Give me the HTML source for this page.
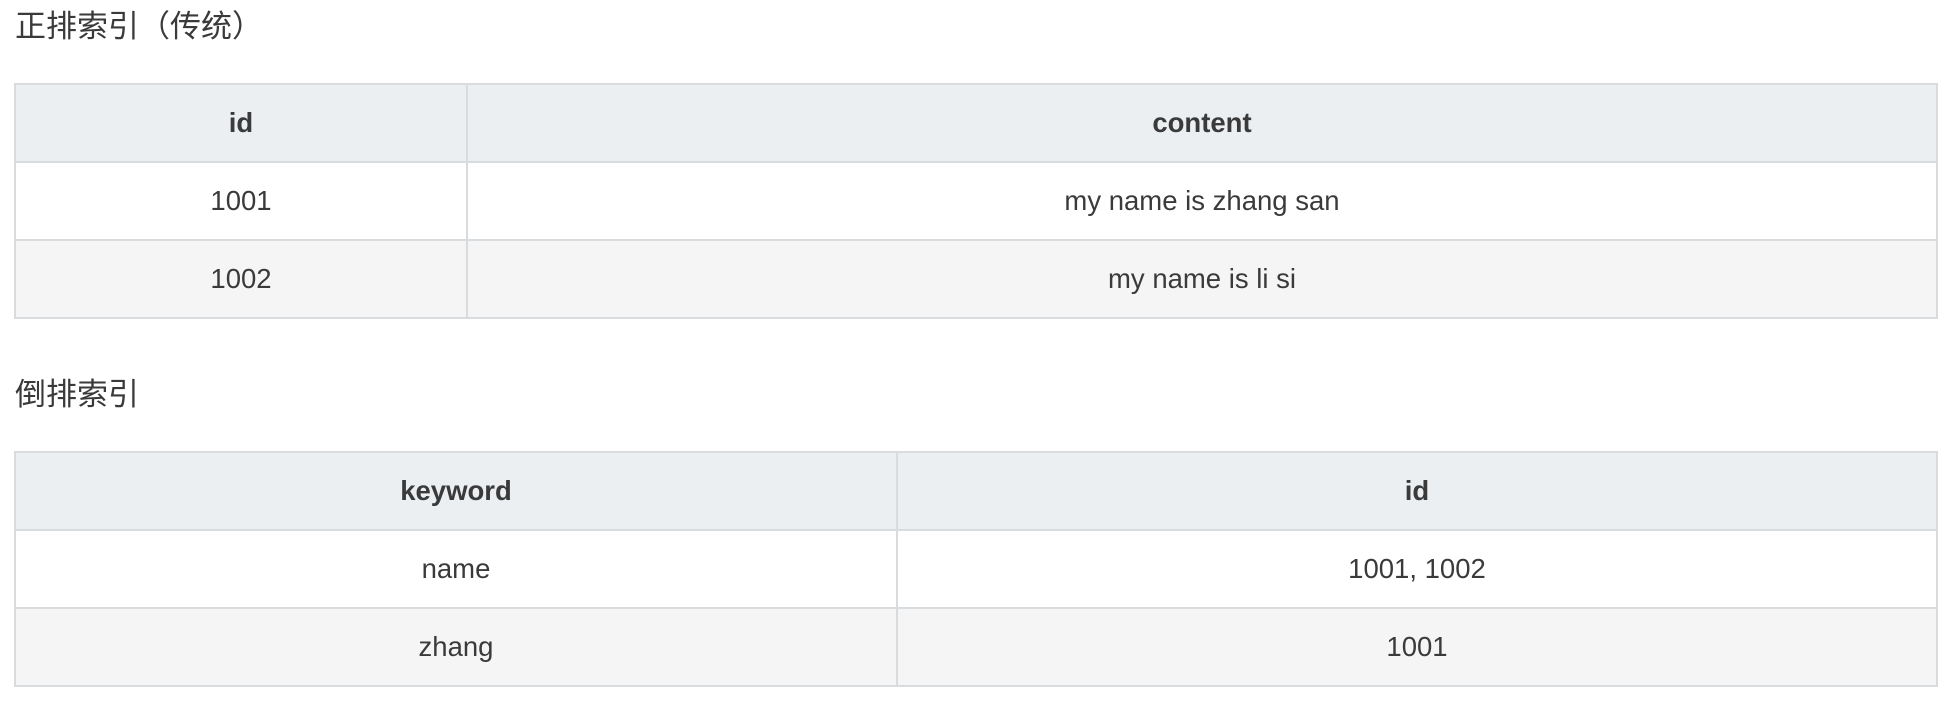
<!DOCTYPE html>
<html><head><meta charset="utf-8"><style>
body{margin:0;background:#fff;width:1952px;height:702px;overflow:hidden;font-family:"Liberation Sans","Noto Sans CJK SC",sans-serif;color:#3a3a3a}
h3{position:absolute;left:15px;margin:0;font-weight:normal;font-size:31px;line-height:36px;color:#3a3a3a}
table{position:absolute;left:14px;width:1924px;border-collapse:collapse;font-size:27.5px}
td,th{border:2px solid #d9dcdf;text-align:center;height:76px;padding:0}
th{background:#ebeff2;font-weight:bold;color:#3a3a3a}
tr.alt td{background:#f5f5f5}
</style></head><body>
<h3 style="top:9px">正排索引（传统）</h3>
<table style="top:83px">
<tr><th style="width:450px">id</th><th>content</th></tr>
<tr><td>1001</td><td>my name is zhang san</td></tr>
<tr class="alt"><td>1002</td><td>my name is li si</td></tr>
</table>
<h3 style="top:377px">倒排索引</h3>
<table style="top:451px">
<tr><th style="width:880px">keyword</th><th>id</th></tr>
<tr><td>name</td><td>1001, 1002</td></tr>
<tr class="alt"><td>zhang</td><td>1001</td></tr>
</table>
</body></html>
